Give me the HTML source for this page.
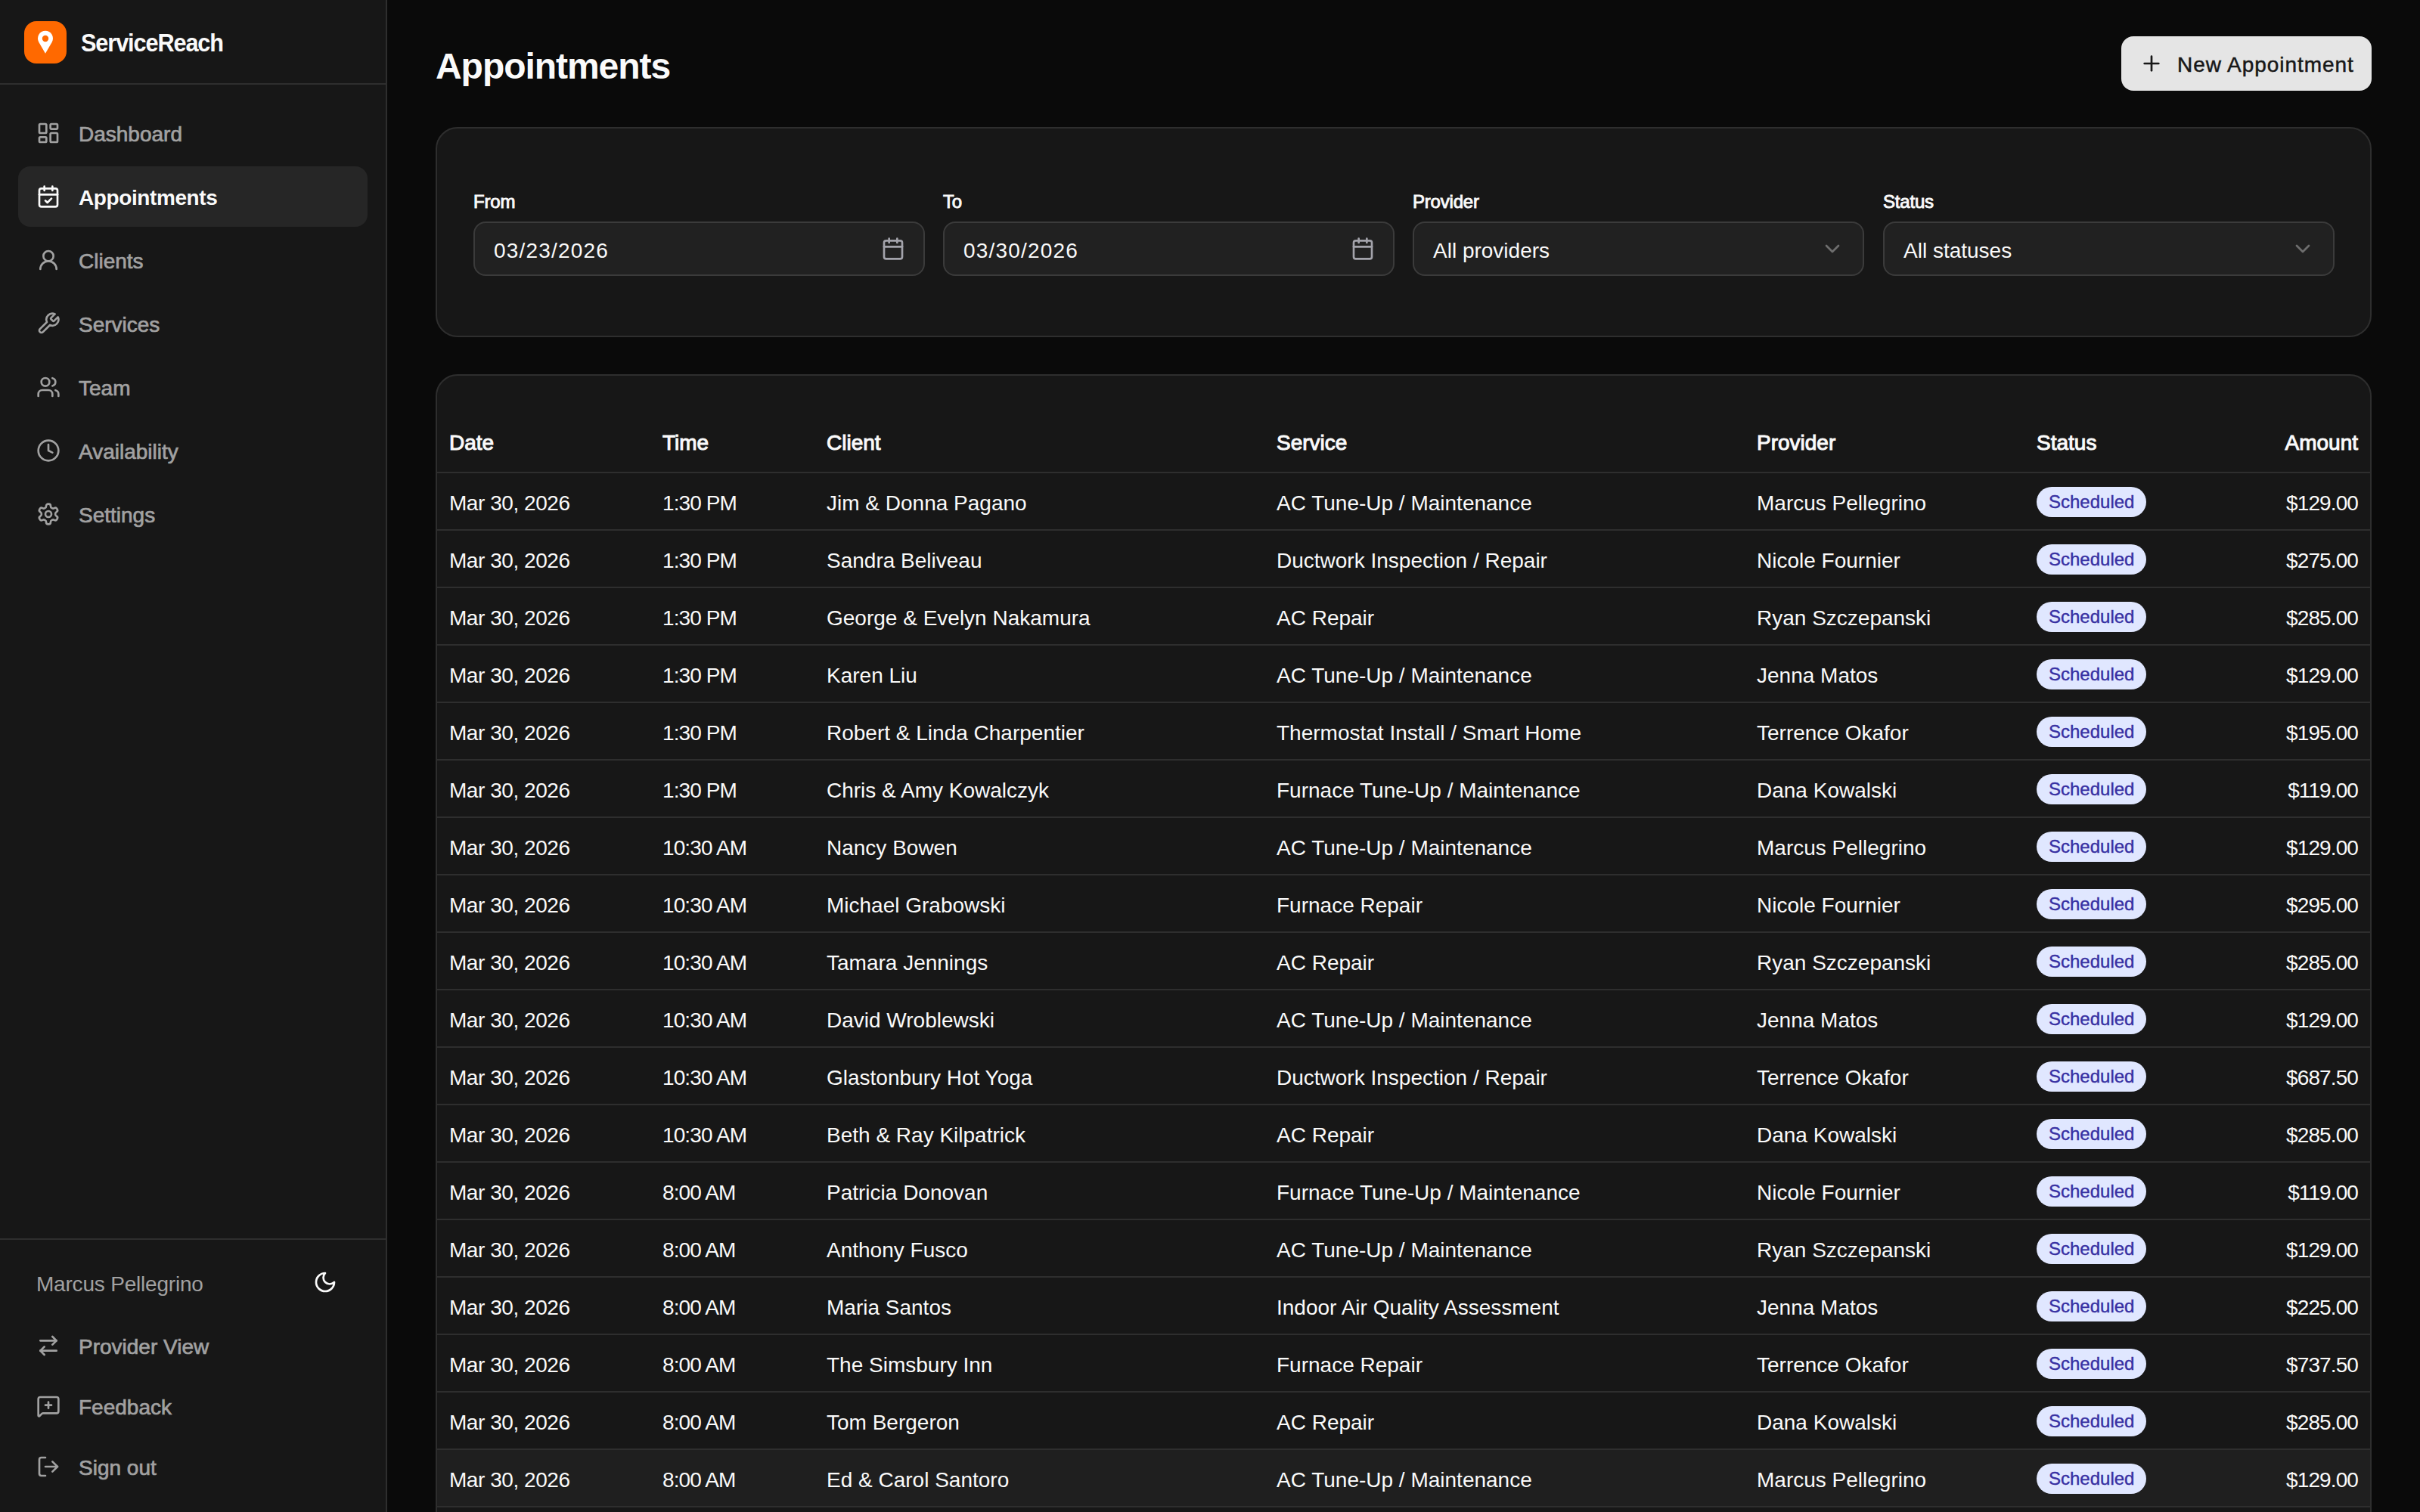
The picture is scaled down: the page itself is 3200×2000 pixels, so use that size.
<!DOCTYPE html>
<html lang="en">
<head>
<meta charset="utf-8">
<title>Appointments - ServiceReach</title>
<style>
*{box-sizing:border-box;margin:0;padding:0}
html,body{width:3200px;height:2000px;overflow:hidden;background:#0a0a0a;font-family:"Liberation Sans",sans-serif;color:#fafafa}
svg{display:block;flex:none}
.ic{width:32px;height:32px;fill:none;stroke:currentColor;stroke-width:2;stroke-linecap:round;stroke-linejoin:round}
/* sidebar */
.sb{position:absolute;left:0;top:0;width:512px;height:2000px;background:#171717;border-right:2px solid #2e2e2e}
.brand{position:absolute;left:0;top:0;width:510px;height:112px;border-bottom:2px solid #2e2e2e}
.logo{position:absolute;left:32px;top:28px;width:56px;height:56px;border-radius:16px;background:#ff6900}
.logo svg{position:absolute;left:0;top:0}
.bname{position:absolute;left:107px;top:37px;font-size:33px;line-height:40px;font-weight:700;letter-spacing:-1.2px;transform:scaleX(0.93);transform-origin:0 0;color:#fafafa;white-space:nowrap}
.nav{position:absolute;left:24px;width:462px;height:80px;border-radius:16px;display:flex;align-items:center;padding-left:24px;color:#a1a1a1;font-size:28px;white-space:nowrap}
.nav .ic{margin-right:24px}
.nav span{position:relative;top:2px;-webkit-text-stroke:0.7px currentColor}
.nav.act{background:#262626;color:#fafafa}
.nav.act span{font-weight:700;-webkit-text-stroke:0;letter-spacing:-0.4px}
.bdiv{position:absolute;left:0;top:1638px;width:510px;height:2px;background:#2e2e2e}
.user{position:absolute;left:48px;top:1683px;font-size:28px;line-height:32px;letter-spacing:-0.2px;color:#a1a1a1;white-space:nowrap}
.moon{position:absolute;left:414px;top:1680px;color:#fafafa}
/* main */
h1{position:absolute;left:576px;top:60px;font-size:48px;line-height:56px;font-weight:700;letter-spacing:-1.05px;white-space:nowrap}
.btn{position:absolute;left:2805px;top:48px;width:331px;height:72px;border-radius:16px;background:#e5e5e5;color:#171717;display:flex;align-items:center;padding-left:24px;font-size:28px;white-space:nowrap}
.btn .ic{margin-right:18px}
.btn span{position:relative;top:2px;-webkit-text-stroke:0.5px currentColor;letter-spacing:0.95px}
.card{position:absolute;left:576px;width:2560px;background:#171717;border:2px solid #2e2e2e;border-radius:29px}
.filters{top:168px;height:278px}
.lbl{position:absolute;top:83px;font-size:24px;line-height:28px;font-weight:400;-webkit-text-stroke:0.9px #fafafa;letter-spacing:-0.2px;white-space:nowrap}
.inp{position:absolute;top:123px;width:597px;height:72px;border:2px solid #3b3b3b;background:#212121;border-radius:16px;display:flex;align-items:center;padding-left:25px;font-size:28px;white-space:nowrap;color:#fafafa}
.inp span{position:relative;top:3px}
.inp .dt{letter-spacing:1.2px}
.inp .ic{position:absolute;right:24px;top:18px}
.inp .cal{color:#a3a3ab}
.inp .chev{color:#6e6e6e}
.tbl{top:495px;height:1600px;overflow:hidden}
table{position:absolute;left:0;top:49px;width:2556px;border-collapse:separate;border-spacing:0;table-layout:fixed}
th,td{padding:0 16px;white-space:nowrap;vertical-align:middle;text-align:left;border-bottom:2px solid #2e2e2e;font-size:28px}
th{height:80px;padding-top:2px;font-weight:400;-webkit-text-stroke:1px #fafafa;color:#fafafa}
td{height:76px;padding-top:6px;color:#fafafa}
td.n{letter-spacing:-0.9px}
td.d{letter-spacing:-0.45px}
th.r,td.r{text-align:right}
tr.hv td{background:#1f1f1f}
.badge{display:inline-block;height:40px;line-height:40px;padding:0 16px;border-radius:20px;background:#e0e7ff;color:#3730a3;font-size:24px;-webkit-text-stroke:0.4px currentColor;vertical-align:middle;position:relative;top:-2px}
</style>
</head>
<body>
<aside class="sb">
  <div class="brand">
    <div class="logo"><svg width="56" height="56" viewBox="0 0 56 56"><path d="M28 42.8 L19.3 27.7 A10 10 0 1 1 36.7 27.7 Z" fill="#fff"/><circle cx="28" cy="23" r="4.2" fill="#ff6900"/></svg></div>
    <div class="bname">ServiceReach</div>
  </div>
  <div class="nav" style="top:136px"><svg class="ic" viewBox="0 0 24 24"><rect width="7" height="9" x="3" y="3" rx="1"/><rect width="7" height="5" x="14" y="3" rx="1"/><rect width="7" height="9" x="14" y="12" rx="1"/><rect width="7" height="5" x="3" y="16" rx="1"/></svg><span>Dashboard</span></div>
  <div class="nav act" style="top:220px"><svg class="ic" viewBox="0 0 24 24"><path d="M8 2v4"/><path d="M16 2v4"/><rect width="18" height="18" x="3" y="4" rx="2"/><path d="M3 10h18"/><path d="m9 16 2 2 4-4"/></svg><span>Appointments</span></div>
  <div class="nav" style="top:304px"><svg class="ic" viewBox="0 0 24 24"><circle cx="12" cy="8" r="5"/><path d="M20 21a8 8 0 0 0-16 0"/></svg><span>Clients</span></div>
  <div class="nav" style="top:388px"><svg class="ic" viewBox="0 0 24 24"><path d="M14.7 6.3a1 1 0 0 0 0 1.4l1.6 1.6a1 1 0 0 0 1.4 0l3.77-3.77a6 6 0 0 1-7.94 7.94l-6.91 6.91a2.12 2.12 0 0 1-3-3l6.91-6.91a6 6 0 0 1 7.94-7.94l-3.76 3.76z"/></svg><span>Services</span></div>
  <div class="nav" style="top:472px"><svg class="ic" viewBox="0 0 24 24"><path d="M16 21v-2a4 4 0 0 0-4-4H6a4 4 0 0 0-4 4v2"/><circle cx="9" cy="7" r="4"/><path d="M22 21v-2a4 4 0 0 0-3-3.87"/><path d="M16 3.13a4 4 0 0 1 0 7.75"/></svg><span>Team</span></div>
  <div class="nav" style="top:556px"><svg class="ic" viewBox="0 0 24 24"><circle cx="12" cy="12" r="10"/><path d="M12 6v6l4 2"/></svg><span>Availability</span></div>
  <div class="nav" style="top:640px"><svg class="ic" viewBox="0 0 24 24"><path d="M12.22 2h-.44a2 2 0 0 0-2 2v.18a2 2 0 0 1-1 1.73l-.43.25a2 2 0 0 1-2 0l-.15-.08a2 2 0 0 0-2.73.73l-.22.38a2 2 0 0 0 .73 2.73l.15.1a2 2 0 0 1 1 1.72v.51a2 2 0 0 1-1 1.74l-.15.09a2 2 0 0 0-.73 2.73l.22.38a2 2 0 0 0 2.73.73l.15-.08a2 2 0 0 1 2 0l.43.25a2 2 0 0 1 1 1.73V20a2 2 0 0 0 2 2h.44a2 2 0 0 0 2-2v-.18a2 2 0 0 1 1-1.73l.43-.25a2 2 0 0 1 2 0l.15.08a2 2 0 0 0 2.73-.73l.22-.39a2 2 0 0 0-.73-2.73l-.15-.08a2 2 0 0 1-1-1.74v-.5a2 2 0 0 1 1-1.74l.15-.09a2 2 0 0 0 .73-2.73l-.22-.38a2 2 0 0 0-2.73-.73l-.15.08a2 2 0 0 1-2 0l-.43-.25a2 2 0 0 1-1-1.73V4a2 2 0 0 0-2-2z"/><circle cx="12" cy="12" r="3"/></svg><span>Settings</span></div>

  <div class="bdiv"></div>
  <div class="user">Marcus Pellegrino</div>
  <svg class="ic moon" viewBox="0 0 24 24"><path d="M12 3a6 6 0 0 0 9 9 9 9 0 1 1-9-9Z"/></svg>
  <div class="nav" style="top:1740px"><svg class="ic" viewBox="0 0 24 24"><path d="m16 3 4 4-4 4"/><path d="M20 7H4"/><path d="m8 21-4-4 4-4"/><path d="M4 17h16"/></svg><span>Provider View</span></div>
  <div class="nav" style="top:1820px"><svg class="ic" viewBox="0 0 24 24"><path d="M22 17a2 2 0 0 1-2 2H6.828a2 2 0 0 0-1.414.586l-2.202 2.202A.71.71 0 0 1 2 21.286V5a2 2 0 0 1 2-2h16a2 2 0 0 1 2 2z"/><path d="M12 8v6"/><path d="M9 11h6"/></svg><span>Feedback</span></div>
  <div class="nav" style="top:1900px"><svg class="ic" viewBox="0 0 24 24"><path d="m16 17 5-5-5-5"/><path d="M21 12H9"/><path d="M9 21H5a2 2 0 0 1-2-2V5a2 2 0 0 1 2-2h4"/></svg><span>Sign out</span></div>
</aside>

<h1>Appointments</h1>
<div class="btn"><svg class="ic" viewBox="0 0 24 24"><path d="M5 12h14"/><path d="M12 5v14"/></svg><span>New Appointment</span></div>

<div class="card filters">
  <div class="lbl" style="left:48px">From</div>
  <div class="lbl" style="left:669px">To</div>
  <div class="lbl" style="left:1290px">Provider</div>
  <div class="lbl" style="left:1912px">Status</div>
  <div class="inp" style="left:48px"><span class="dt">03/23/2026</span><svg class="ic cal" viewBox="0 0 24 24"><path d="M8 2v4"/><path d="M16 2v4"/><rect width="18" height="18" x="3" y="4" rx="2"/><path d="M3 10h18"/></svg></div>
  <div class="inp" style="left:669px"><span class="dt">03/30/2026</span><svg class="ic cal" viewBox="0 0 24 24"><path d="M8 2v4"/><path d="M16 2v4"/><rect width="18" height="18" x="3" y="4" rx="2"/><path d="M3 10h18"/></svg></div>
  <div class="inp" style="left:1290px"><span>All providers</span><svg class="ic chev" viewBox="0 0 24 24"><path d="m6 9 6 6 6-6"/></svg></div>
  <div class="inp" style="left:1912px"><span>All statuses</span><svg class="ic chev" viewBox="0 0 24 24"><path d="m6 9 6 6 6-6"/></svg></div>
</div>

<div class="card tbl">
<table>
<colgroup><col style="width:282px"><col style="width:217px"><col style="width:595px"><col style="width:635px"><col style="width:370px"><col style="width:300px"><col></colgroup>
<thead><tr><th>Date</th><th>Time</th><th>Client</th><th>Service</th><th>Provider</th><th>Status</th><th class="r">Amount</th></tr></thead>
<tbody>
<tr><td class="d">Mar 30, 2026</td><td class="n">1:30 PM</td><td>Jim &amp; Donna Pagano</td><td>AC Tune-Up / Maintenance</td><td>Marcus Pellegrino</td><td><span class="badge">Scheduled</span></td><td class="r n">$129.00</td></tr>
<tr><td class="d">Mar 30, 2026</td><td class="n">1:30 PM</td><td>Sandra Beliveau</td><td>Ductwork Inspection / Repair</td><td>Nicole Fournier</td><td><span class="badge">Scheduled</span></td><td class="r n">$275.00</td></tr>
<tr><td class="d">Mar 30, 2026</td><td class="n">1:30 PM</td><td>George &amp; Evelyn Nakamura</td><td>AC Repair</td><td>Ryan Szczepanski</td><td><span class="badge">Scheduled</span></td><td class="r n">$285.00</td></tr>
<tr><td class="d">Mar 30, 2026</td><td class="n">1:30 PM</td><td>Karen Liu</td><td>AC Tune-Up / Maintenance</td><td>Jenna Matos</td><td><span class="badge">Scheduled</span></td><td class="r n">$129.00</td></tr>
<tr><td class="d">Mar 30, 2026</td><td class="n">1:30 PM</td><td>Robert &amp; Linda Charpentier</td><td>Thermostat Install / Smart Home</td><td>Terrence Okafor</td><td><span class="badge">Scheduled</span></td><td class="r n">$195.00</td></tr>
<tr><td class="d">Mar 30, 2026</td><td class="n">1:30 PM</td><td>Chris &amp; Amy Kowalczyk</td><td>Furnace Tune-Up / Maintenance</td><td>Dana Kowalski</td><td><span class="badge">Scheduled</span></td><td class="r n">$119.00</td></tr>
<tr><td class="d">Mar 30, 2026</td><td class="n">10:30 AM</td><td>Nancy Bowen</td><td>AC Tune-Up / Maintenance</td><td>Marcus Pellegrino</td><td><span class="badge">Scheduled</span></td><td class="r n">$129.00</td></tr>
<tr><td class="d">Mar 30, 2026</td><td class="n">10:30 AM</td><td>Michael Grabowski</td><td>Furnace Repair</td><td>Nicole Fournier</td><td><span class="badge">Scheduled</span></td><td class="r n">$295.00</td></tr>
<tr><td class="d">Mar 30, 2026</td><td class="n">10:30 AM</td><td>Tamara Jennings</td><td>AC Repair</td><td>Ryan Szczepanski</td><td><span class="badge">Scheduled</span></td><td class="r n">$285.00</td></tr>
<tr><td class="d">Mar 30, 2026</td><td class="n">10:30 AM</td><td>David Wroblewski</td><td>AC Tune-Up / Maintenance</td><td>Jenna Matos</td><td><span class="badge">Scheduled</span></td><td class="r n">$129.00</td></tr>
<tr><td class="d">Mar 30, 2026</td><td class="n">10:30 AM</td><td>Glastonbury Hot Yoga</td><td>Ductwork Inspection / Repair</td><td>Terrence Okafor</td><td><span class="badge">Scheduled</span></td><td class="r n">$687.50</td></tr>
<tr><td class="d">Mar 30, 2026</td><td class="n">10:30 AM</td><td>Beth &amp; Ray Kilpatrick</td><td>AC Repair</td><td>Dana Kowalski</td><td><span class="badge">Scheduled</span></td><td class="r n">$285.00</td></tr>
<tr><td class="d">Mar 30, 2026</td><td class="n">8:00 AM</td><td>Patricia Donovan</td><td>Furnace Tune-Up / Maintenance</td><td>Nicole Fournier</td><td><span class="badge">Scheduled</span></td><td class="r n">$119.00</td></tr>
<tr><td class="d">Mar 30, 2026</td><td class="n">8:00 AM</td><td>Anthony Fusco</td><td>AC Tune-Up / Maintenance</td><td>Ryan Szczepanski</td><td><span class="badge">Scheduled</span></td><td class="r n">$129.00</td></tr>
<tr><td class="d">Mar 30, 2026</td><td class="n">8:00 AM</td><td>Maria Santos</td><td>Indoor Air Quality Assessment</td><td>Jenna Matos</td><td><span class="badge">Scheduled</span></td><td class="r n">$225.00</td></tr>
<tr><td class="d">Mar 30, 2026</td><td class="n">8:00 AM</td><td>The Simsbury Inn</td><td>Furnace Repair</td><td>Terrence Okafor</td><td><span class="badge">Scheduled</span></td><td class="r n">$737.50</td></tr>
<tr><td class="d">Mar 30, 2026</td><td class="n">8:00 AM</td><td>Tom Bergeron</td><td>AC Repair</td><td>Dana Kowalski</td><td><span class="badge">Scheduled</span></td><td class="r n">$285.00</td></tr>
<tr class="hv"><td class="d">Mar 30, 2026</td><td class="n">8:00 AM</td><td>Ed &amp; Carol Santoro</td><td>AC Tune-Up / Maintenance</td><td>Marcus Pellegrino</td><td><span class="badge">Scheduled</span></td><td class="r n">$129.00</td></tr>
<tr><td class="d">Mar 30, 2026</td><td class="n">8:00 AM</td><td>Linda Marchetti</td><td>Furnace Repair</td><td>Nicole Fournier</td><td><span class="badge">Scheduled</span></td><td class="r n">$295.00</td></tr>
</tbody>
</table>
</div>
<script>
(function(){var w=window.innerWidth;if(w&&Math.abs(w-3200)>2){document.documentElement.style.zoom=(w/3200);}})();
</script>
</body>
</html>
